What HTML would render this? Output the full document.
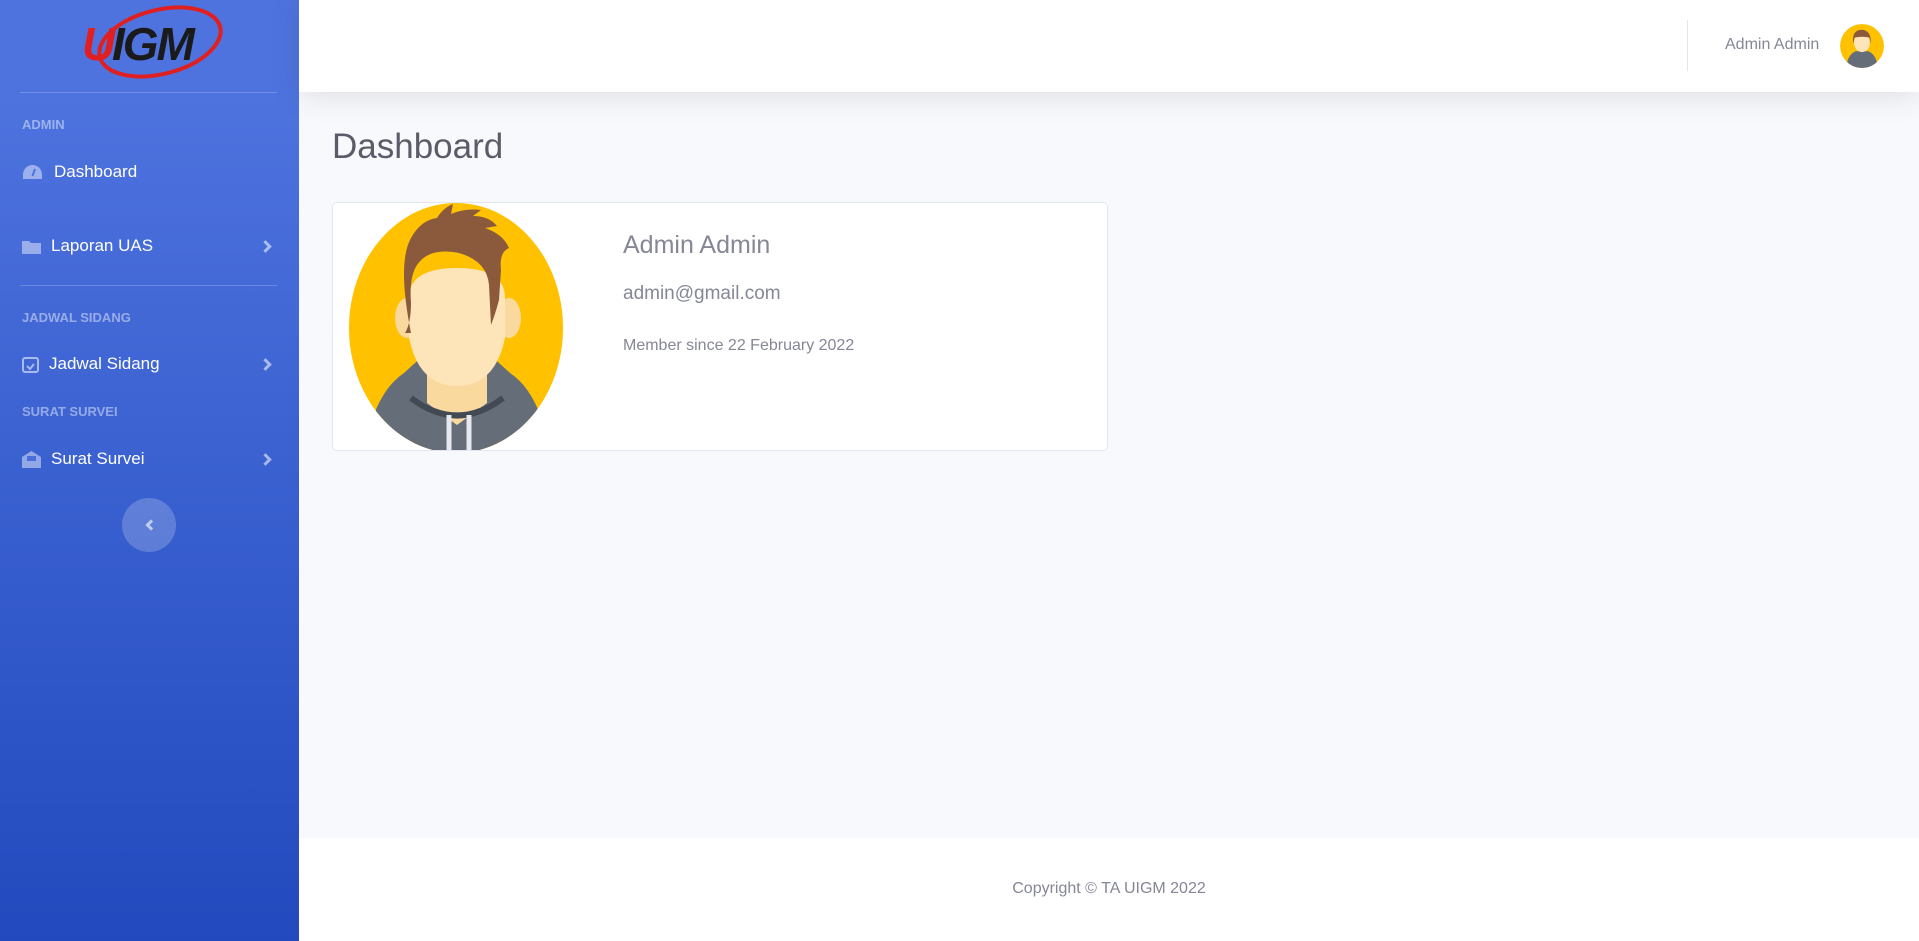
<!DOCTYPE html>
<html><head><meta charset="utf-8"><style>
*{box-sizing:border-box;margin:0;padding:0}
body{width:1919px;height:941px;overflow:hidden;font-family:"Liberation Sans",sans-serif;background:#f8f9fc;position:relative}
#sb{position:absolute;left:0;top:0;width:299px;height:941px;background:linear-gradient(180deg,#4e73df 10%,#224abe 100%);color:#fff}
.hr{position:absolute;left:20px;width:257px;height:1px;background:rgba(255,255,255,.2)}
.hd{position:absolute;left:22px;font-size:13px;font-weight:bold;color:rgba(255,255,255,.45)}
.it{position:absolute;left:22px;font-size:17px;color:#fff;display:flex;align-items:center}
.it svg{margin-right:10px}
.chev{position:absolute;left:261px;width:9px;height:9px;border-right:3px solid rgba(255,255,255,.55);border-top:3px solid rgba(255,255,255,.55);transform:rotate(45deg)}
#top{position:absolute;left:299px;top:0;right:0;height:92px;background:#fff;box-shadow:0 .15rem 1.75rem 0 rgba(58,59,69,.15)}
#foot{position:absolute;left:299px;top:838px;right:0;bottom:0;background:#fff;text-align:center;color:#858796;font-size:16px;padding-top:42px}
</style></head><body>
<div id="sb">
 <svg width="150" height="86" style="position:absolute;left:78px;top:2px" viewBox="0 0 150 86">
  <ellipse cx="82" cy="40" rx="62" ry="32" transform="rotate(-14 82 40)" fill="none" stroke="#e02020" stroke-width="4"/>
  <text x="4" y="58" font-family="Liberation Sans" font-weight="bold" font-style="italic" font-size="46" fill="#e02020">U</text>
  <text x="34" y="58" font-family="Liberation Sans" font-weight="bold" font-style="italic" font-size="46" fill="#1a1a1a" letter-spacing="-2">IGM</text>
 </svg>
 <div class="hr" style="top:92px"></div>
 <div class="hd" style="top:117px">ADMIN</div>
 <div class="it" style="top:162px"><svg width="21" height="16" viewBox="0 0 21 16"><path d="M10.5 1A9.5 9.5 0 0 0 1 10.5V15h19v-4.5A9.5 9.5 0 0 0 10.5 1z" fill="rgba(255,255,255,.45)"/><path d="M10.5 12L13 5" stroke="#4e73df" stroke-width="2"/></svg><span style="margin-left:1px">Dashboard</span></div>
 <div class="it" style="top:236px"><svg width="19" height="15" viewBox="0 0 19 15"><path d="M0 2h7l2 2h10v11H0z" fill="rgba(255,255,255,.45)"/></svg>Laporan UAS</div>
 <div class="chev" style="top:242px"></div>
 <div class="hr" style="top:285px"></div>
 <div class="hd" style="top:310px">JADWAL SIDANG</div>
 <div class="it" style="top:354px"><svg width="17" height="18" viewBox="0 0 17 18"><rect x="1" y="3" width="15" height="14" rx="2" fill="none" stroke="rgba(255,255,255,.55)" stroke-width="2"/><path d="M5 11l3 3 4-5" stroke="rgba(255,255,255,.55)" stroke-width="2" fill="none"/></svg>Jadwal Sidang</div>
 <div class="chev" style="top:360px"></div>
 <div class="hd" style="top:404px">SURAT SURVEI</div>
 <div class="it" style="top:449px"><svg width="19" height="17" viewBox="0 0 19 17"><path d="M0 6l9.5-6 9.5 6v11H0z" fill="rgba(255,255,255,.45)"/><rect x="5" y="5" width="9" height="5" fill="#4a6ddb"/></svg>Surat Survei</div>
 <div class="chev" style="top:455px"></div>
 <div style="position:absolute;left:122px;top:498px;width:54px;height:54px;border-radius:50%;background:rgba(255,255,255,.2)"></div>
 <div style="position:absolute;left:147px;top:521px;width:8px;height:8px;border-left:3px solid rgba(255,255,255,.6);border-bottom:3px solid rgba(255,255,255,.6);transform:rotate(45deg)"></div>
</div>
<div id="top">
 <div style="position:absolute;left:1388px;top:20px;width:1px;height:51px;background:#e3e6f0"></div>
 <div style="position:absolute;left:1426px;top:36px;font-size:16px;color:#858796">Admin Admin</div>
 <svg style="position:absolute;left:1541px;top:24px" width="44" height="44" viewBox="0 0 100 100"><defs><clipPath id="c1"><circle cx="50" cy="50" r="50"/></clipPath></defs><g clip-path="url(#c1)"><circle cx="50" cy="50" r="50" fill="#ffc100"/><path d="M15 100q0-28 20-38h30q20 10 20 38z" fill="#656d78"/><ellipse cx="50" cy="42" rx="18" ry="22" fill="#fee5b9"/><path d="M30 45q-4-32 20-32 22 2 20 32l-3-14q-17-4-34 0z" fill="#8b5a3c"/></g></svg>
</div>
<div style="position:absolute;left:332px;top:127px;font-size:35px;color:#5a5c69">Dashboard</div>
<div style="position:absolute;left:332px;top:202px;width:776px;height:249px;background:#fff;border:1px solid #e3e6f0;border-radius:5px;overflow:hidden">
 <svg style="position:absolute;left:16px;top:0" width="215" height="250" viewBox="0 0 215 250"><defs><clipPath id="c2"><ellipse cx="107" cy="125" rx="107" ry="125"/></clipPath></defs><g clip-path="url(#c2)">
  <rect width="215" height="250" fill="#ffc100"/>
  <path d="M15 250q10-60 40-80l22-20h62l22 20q30 20 40 80z" fill="#656d78"/>
  <path d="M78 150h60v50l-30 22-30-22z" fill="#f9d99e"/>
  <path d="M62 195q46 35 92 0" stroke="#434a54" stroke-width="6" fill="none"/>
  <path d="M100 212v40M120 212v40" stroke="#e6e9ed" stroke-width="5"/>
  <ellipse cx="58" cy="115" rx="12" ry="20" fill="#f9d99e"/><ellipse cx="160" cy="115" rx="12" ry="20" fill="#f9d99e"/>
  <path d="M60 95q0-30 48-30t48 30v40q-10 48-48 48t-48-48z" fill="#fee5b9"/>
  <path d="M62 130q-14-70 0-95 10-18 26-20 6-10 16-14l-2 10q14-6 30-4l-8 6q16 0 24 10l-12 2q18 6 24 20-10 4-8 22l-2 30q-4 15-8 25l-2-40q-2-24-30-32-30-6-42 12-8 12-6 38 0 20-6 30z" fill="#8b5a3c"/>
 </g></svg>
 <div style="position:absolute;left:290px;top:28px;font-size:25px;color:#858796">Admin Admin</div>
 <div style="position:absolute;left:290px;top:80px;font-size:19px;color:#858796">admin@gmail.com</div>
 <div style="position:absolute;left:290px;top:134px;font-size:16px;color:#858796">Member since 22 February 2022</div>
</div>
<div id="foot">Copyright © TA UIGM 2022</div>
</body></html>
